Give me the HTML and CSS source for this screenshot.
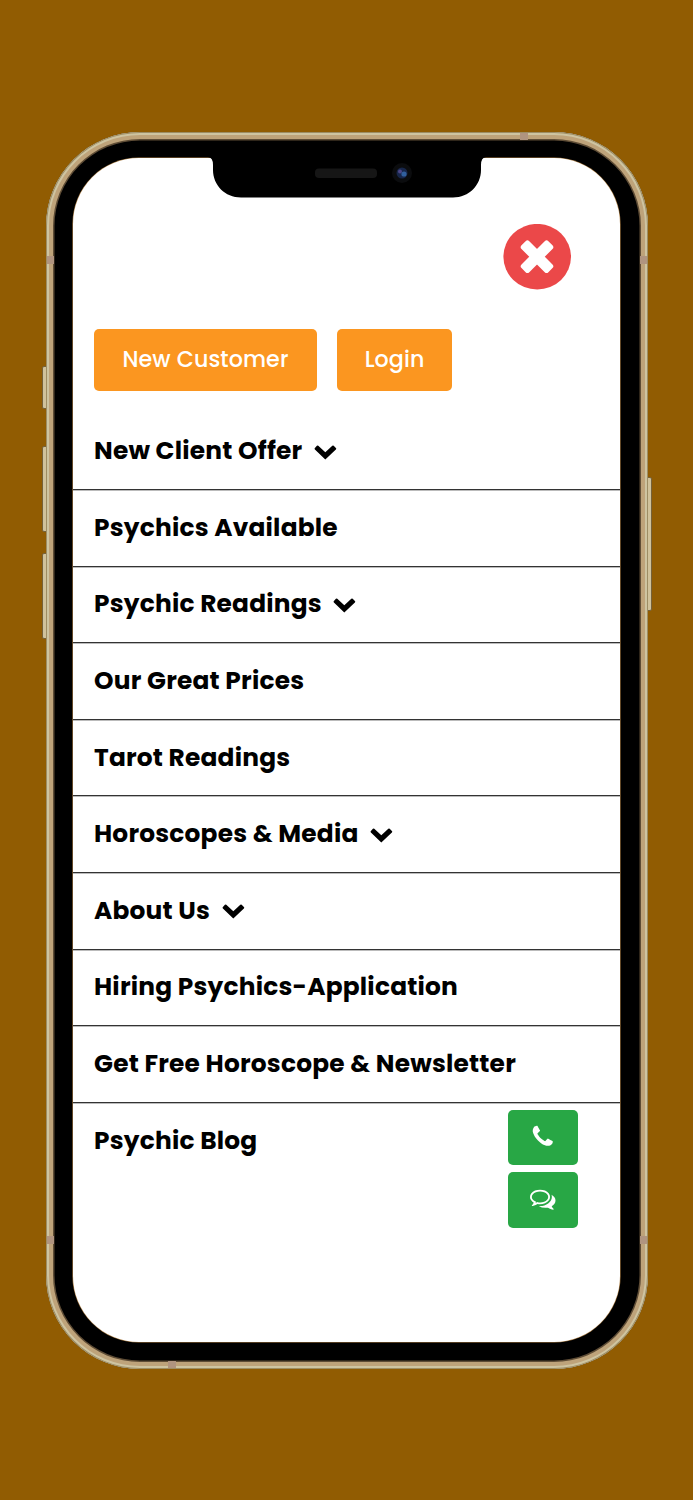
FILE: index.html
```
<!DOCTYPE html>
<html lang="en">
<head>
<meta charset="utf-8">
<title>Menu</title>
<link rel="stylesheet" href="styles.css">
</head>
<body>
<svg class="defs" width="0" height="0" aria-hidden="true">
  <symbol id="chevron" viewBox="0 0 23 15"><path d="M.9 2.900 2.900 .8Q3.600 .2 4.300 .8L11.300 7.300 18.300 .8Q19 .2 19.700 .8L21.900 2.900Q22.700 3.700 21.900 4.500L11.300 14.600 .9 4.500Q.1 3.700 .9 2.900Z" fill="currentColor"/></symbol>
</svg>
<main class="phone">
  <span class="key mute"></span><span class="key vol-up"></span><span class="key vol-down"></span><span class="key power"></span>
  <div class="frame">
    <span class="band band-top"></span><span class="band band-bottom"></span>
    <span class="band side l1"></span><span class="band side l2"></span><span class="band side r1"></span><span class="band side r2"></span>
    <div class="screen">
      <header class="top"><button class="close" aria-label="Close"><svg viewBox="0 0 68 66"><ellipse cx="34.200" cy="32.700" rx="33.800" ry="32.800" fill="#eb4849"/><g fill="#fff" transform="translate(34 32.700)"><rect x="-19" y="-5.500" width="38" height="11" rx="2.600" transform="rotate(45)"/><rect x="-19" y="-5.500" width="38" height="11" rx="2.600" transform="rotate(-45)"/></g></svg></button></header>
      <div class="actions"><button class="btn signup">New Customer</button><button class="btn login">Login</button></div>
      <nav class="menu">
        <a class="row">New Client Offer<svg><use href="#chevron"/></svg></a>
        <a class="row">Psychics Available</a>
        <a class="row">Psychic Readings<svg><use href="#chevron"/></svg></a>
        <a class="row">Our Great Prices</a>
        <a class="row">Tarot Readings</a>
        <a class="row">Horoscopes &amp; Media<svg><use href="#chevron"/></svg></a>
        <a class="row">About Us<svg><use href="#chevron"/></svg></a>
        <a class="row">Hiring Psychics-Application</a>
        <a class="row">Get Free Horoscope &amp; Newsletter</a>
        <a class="row">Psychic Blog</a>
      </nav>
      <div class="contact">
        <button aria-label="Call"><svg viewBox="0 0 1792 1792"><path d="M1600 1240q0 27-10 70.500t-21 68.500q-21 50-122 106-94 51-186 51-27 0-53-3.500t-57-12.500-47-14.500-55.500-20.500-49.500-18q-98-35-175-83-127-79-264-216t-216-264q-48-77-83-175-3-9-18-49.500t-20.500-55.500-14.500-47-12.500-57-3.500-53q0-92 51-186 56-101 106-122 25-11 68.500-21t70.500-10q14 0 21 3 18 6 53 76 11 19 30 54t35 63.500 31 53.500q3 4 17.500 25t21.500 35.500 7 28.500q0 20-28.500 50t-62 55-62 53-28.500 46q0 9 5 22.500t8.500 20.500 14 24 11.500 19q76 137 174 235t235 174q2 1 19 11.500t24 14 20.500 8.500 22.500 5q18 0 46-28.500t53-62 55-62 50-28.500q14 0 28.500 7t35.500 21.500 25 17.500q25 15 53.500 31t63.500 35 54 30q70 35 76 53 3 7 3 21z"/></svg></button>
        <button aria-label="Chat"><svg viewBox="0 0 1792 1792"><path d="M704 384q-153 0-286 52t-211.500 141-78.500 191q0 82 53 158t149 132l97 56-35 84q34-20 62-39l44-31 53 10q78 14 153 14 153 0 286-52t211.500-141 78.500-191-78.500-191-211.500-141-286-52zm0-128q191 0 353.500 68.500t256.500 186.500 94 257-94 257-256.500 186.500-353.500 68.500q-86 0-176-16-124 88-278 128-36 9-86 16h-3q-11 0-20.500-8t-11.500-21q-1-3-1-6.500t.5-6.500 2-6l2.500-5 3.500-5.500 4-5 4.500-5 4-4.500q5-6 23-25t26-29.500 22.500-29 25-38.500 20.500-44q-124-72-195-177t-71-224q0-139 94-257t256.500-186.500 353.500-68.500zm822 1169q10 24 20.500 44t25 38.500 22.500 29 26 29.500 23 25q1 1 4 4.500t4.500 5 4 5 3.500 5.500l2.500 5 2 6 .5 6.500-1 6.500q-3 14-13 22t-22 7q-50-7-86-16-154-40-278-128-90 16-176 16-271 0-472-132 58 4 88 4 161 0 309-45t264-129q125-92 192-212t67-254q0-77-23-152 129 71 204 178t75 230q0 120-71 224.500t-195 176.500z"/></svg></button>
      </div>
    </div>
    <svg class="notch" viewBox="0 -2 278 44"><path d="M0-2V0Q5 .5 5 8V13C5 28 17 40.500 33 40.500H245C261 40.500 273 28 273 13V8Q273 .5 278 0V-2Z" fill="#000"/><rect x="107" y="11.500" width="62" height="9.500" rx="4" fill="#161616"/><circle cx="194" cy="16" r="10" fill="#0b0c0e"/><circle cx="194" cy="16" r="5.500" fill="#17264a"/><circle cx="192" cy="14.500" r="2" fill="#4b4688"/><circle cx="196" cy="17" r="2.600" fill="#315f9d"/></svg>
  </div>
</main>
</body>
</html>
```
FILE: styles.css
```
* { box-sizing: border-box; }
body { margin: 0; height: 1500px; background: #915c02; font-family: Poppins, Inter, sans-serif; overflow: hidden; }
button { border: 0; padding: 0; font: inherit; color: #fff; }
.defs { position: absolute; }
.phone { position: relative; width: 602px; height: 1237px; margin: 131.500px 0 0 45.700px; }
.frame { position: relative; height: 100%; padding: 26px 27.500px 26.500px 27.300px; border-radius: 94px; background: #000; box-shadow: inset 0 0 0 1px #9d8d64, inset 0 0 0 3px #cec4a1, inset 0 0 0 7px #bea37a, inset 0 0 0 8.500px #5e4c35; }
.key { position: absolute; left: -4px; width: 6px; border-radius: 2px; border: 1px solid #75613a; background: #d0c29c; }
.mute { top: 234px; height: 43px; }
.vol-up { top: 314px; height: 86px; }
.vol-down { top: 421px; height: 86px; }
.power { left: auto; right: -4.500px; top: 345px; height: 134px; }
.band { position: absolute; width: 8px; height: 7px; background: #b0947f; }
.band-top { left: 474px; top: 1px; }
.band-bottom { left: 122px; bottom: 1px; }
.side { width: 7px; height: 8px; }
.l1, .l2 { left: 1px; }
.r1, .r2 { right: 1px; }
.l1, .r1 { top: 124px; }
.l2, .r2 { top: 1104px; }
.screen { position: relative; height: 100%; border-radius: 66px; background: #fff; overflow: hidden; box-shadow: 0 0 0 .6px #a77b43; display: flex; flex-direction: column; }
.notch { position: absolute; left: 162.300px; top: 23.500px; width: 278px; height: 44px; }
.top { display: flex; justify-content: flex-end; padding: 66px 49px 0 0; height: 171px; }
.close { width: 68px; height: 66px; background: none; }
.close svg { display: block; }
.actions { display: flex; gap: 19.800px; padding-left: 21px; height: 85px; }
.btn { height: 62.600px; border-radius: 5px; background: #fb9620; font-size: 22.200px; font-weight: 500; letter-spacing: .1px; padding-bottom: 1px; }
.signup { width: 223px; }
.login { width: 115.500px; }
.row { display: flex; align-items: center; gap: 11.500px; height: 76.600px; padding: 0 0 1px 21px; border-bottom: 1px solid #333; box-shadow: 0 1px #bbb; font-size: 24.850px; letter-spacing: .21px; font-weight: 700; color: #000; white-space: nowrap; }
.row:last-child { border: 0; box-shadow: none; }
.row svg { width: 23px; height: 15px; margin-top: 3px; }
.contact { position: absolute; right: 42px; top: 952px; display: flex; flex-direction: column; gap: 7px; }
.contact button { width: 70px; height: 55.600px; border-radius: 5px; background: #28a745; display: flex; align-items: center; justify-content: center; padding-bottom: 2px; }
.contact svg { width: 25.500px; height: 25.500px; fill: #fff; }
```
